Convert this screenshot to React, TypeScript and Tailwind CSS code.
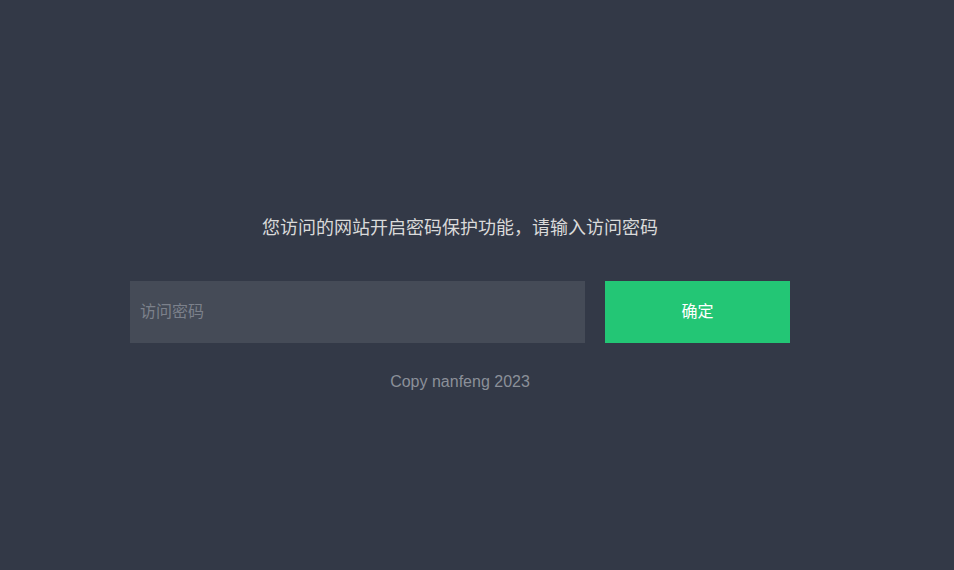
import React from 'react'

const App: React.FC = () => {
  return (
    <div
      className="min-h-[570px] w-full bg-[#333947]"
      style={{ fontFamily: '"Liberation Sans", Arial, "Noto Sans CJK SC", sans-serif' }}
    >
      <div className="ml-[130px] w-[660px] pt-[214px]">
        {/* Title */}
        <h1 className="text-center text-[18px] leading-[28px] font-normal text-[#dadada]">
          您访问的网站开启密码保护功能，请输入访问密码
        </h1>

        {/* Form */}
        <form className="mt-[39px] flex gap-5" onSubmit={(e) => e.preventDefault()}>
          <input
            type="password"
            placeholder="访问密码"
            className="h-[62px] w-[455px] bg-[#454b57] px-[10px] text-[16px] text-[#dddddd] placeholder:text-[#7c818b] outline-none"
          />
          <button
            type="submit"
            className="h-[62px] w-[185px] bg-[#23c675] text-[16px] text-white"
          >
            确定
          </button>
        </form>

        {/* Footer */}
        <p className="mt-[27px] text-center text-[16px] leading-[24px] text-[#8b9099]">
          Copy nanfeng 2023
        </p>
      </div>
    </div>
  )
}

export default App
